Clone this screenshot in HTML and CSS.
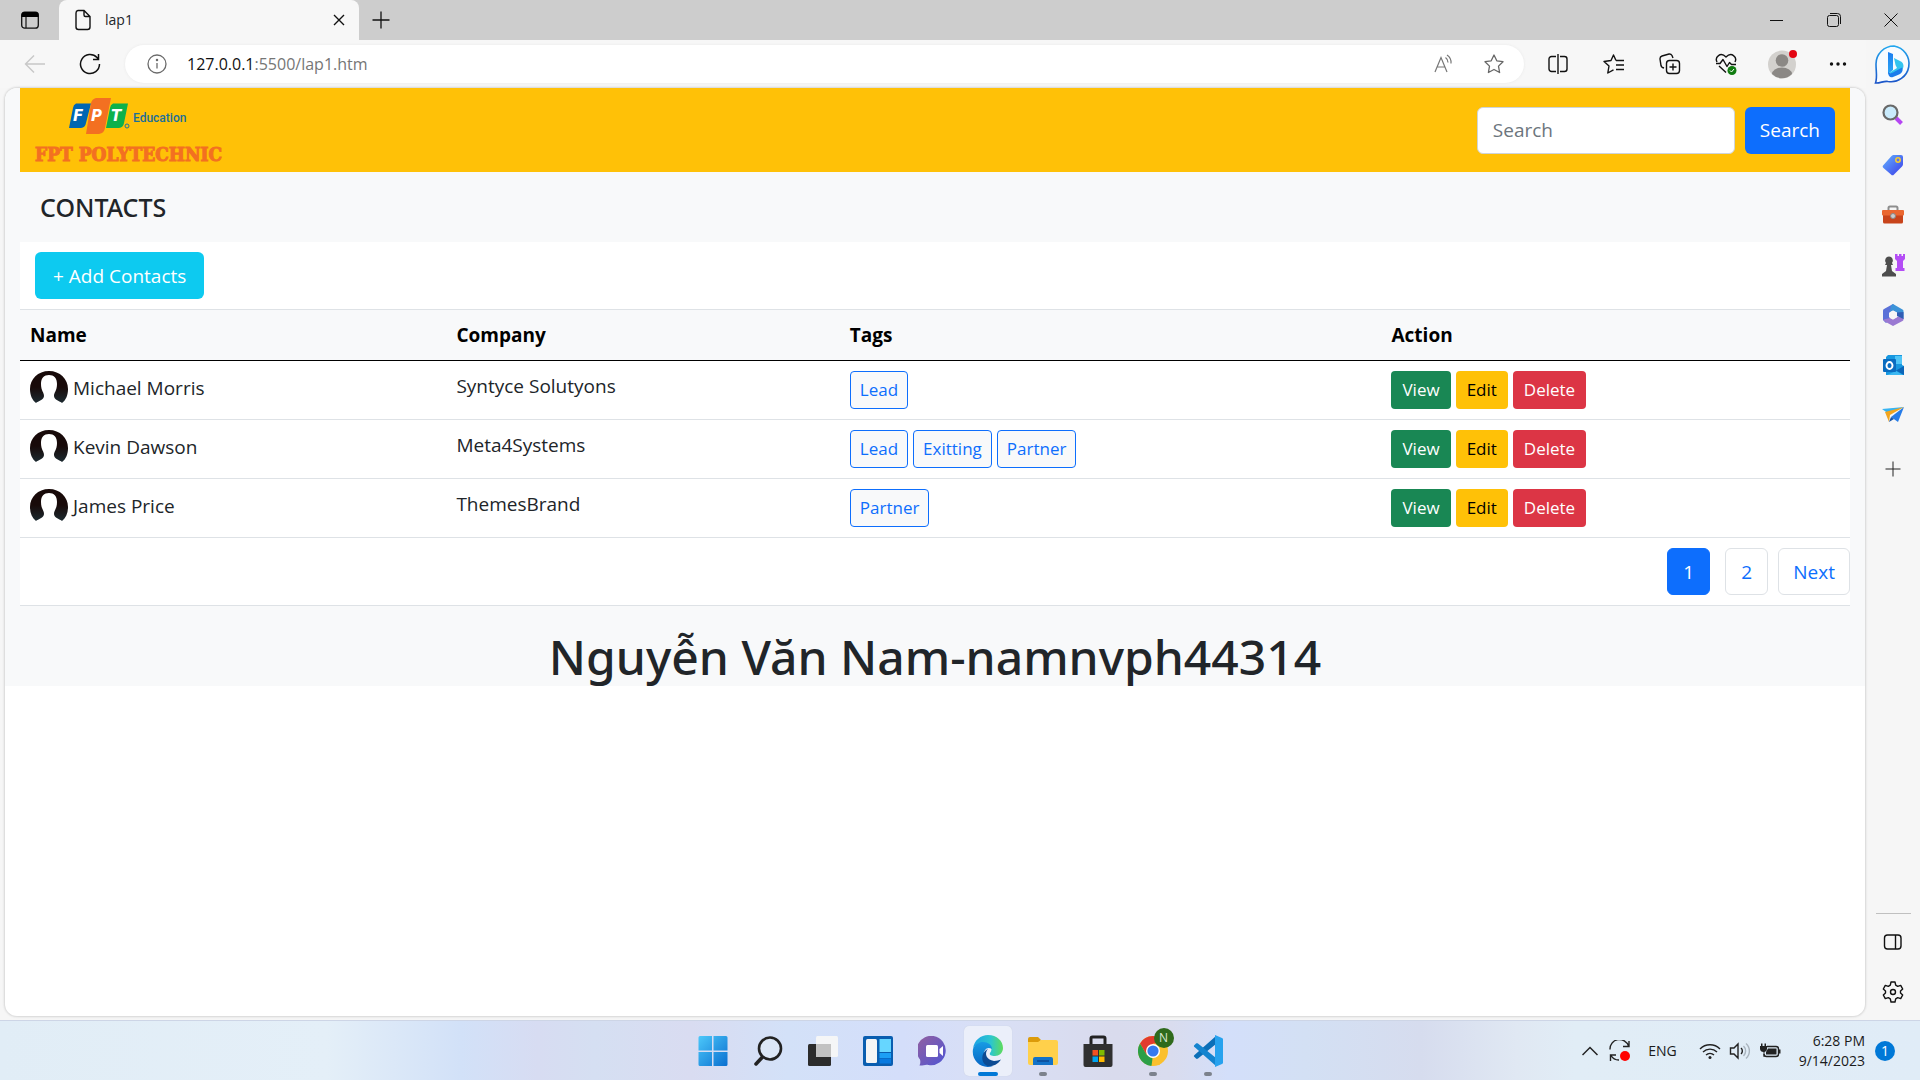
FILE: index.html
```html
<!DOCTYPE html>
<html lang="vi">
<head>
<meta charset="utf-8">
<title>lap1</title>
<link rel="stylesheet" href="styles.css">
</head>
<body>
<header class="tabstrip">
  <button class="tab-actions" aria-label="Tab actions"><svg width="20" height="20" viewBox="0 0 20 20"><rect x="1.700" y="2.200" width="16.600" height="16" rx="3" fill="none" stroke="#111" stroke-width="1.300"/><path d="M1.500 7V5a3 3 0 0 1 3-3h11a3 3 0 0 1 3 3v2z" fill="#000"/><path d="M6 7v11" stroke="#111" stroke-width="1.200"/></svg></button>
  <div class="tab">
    <svg width="18" height="22" viewBox="0 0 18 22" fill="none" stroke="#111" stroke-width="1.400"><path d="M4 1.500h6l6 6V18a2.500 2.500 0 0 1-2.500 2.500h-9A2.500 2.500 0 0 1 2 18V4a2.500 2.500 0 0 1 2-2.500zM10 1.500V6a1.500 1.500 0 0 0 1.500 1.500H16"/></svg>
    <span class="tab-title">lap1</span>
    <button class="tab-close" aria-label="Close tab"><svg width="12" height="12" viewBox="0 0 12 12" stroke="#111" stroke-width="1.400"><path d="M1 1l10 10M11 1L1 11"/></svg></button>
  </div>
  <button class="new-tab" aria-label="New tab"><svg width="18" height="18" viewBox="0 0 18 18" stroke="#111" stroke-width="1.300"><path d="M9 .500v17M.500 9h17"/></svg></button>
  <div class="window-controls">
    <button aria-label="Minimize"><svg width="14" height="14" viewBox="0 0 14 14" stroke="#111"><path d="M0 7.500h13"/></svg></button>
    <button aria-label="Restore"><svg width="14" height="14" viewBox="0 0 14 14" fill="none" stroke="#111"><rect x=".500" y="2.500" width="11" height="11" rx="2"/><path d="M3 .500h7.500a3 3 0 0 1 3 3V11"/></svg></button>
    <button aria-label="Close"><svg width="14" height="14" viewBox="0 0 14 14" stroke="#111"><path d="M.500.500l13 13M13.500.500l-13 13"/></svg></button>
  </div>
</header>

<div class="browser">
  <div class="main-column">
    <nav class="toolbar">
      <div class="nav-buttons">
        <button aria-label="Back"><svg width="22" height="20" viewBox="0 0 22 20" fill="none" stroke="#c8c8c8" stroke-width="1.400"><path d="M21 10H1.500M10 1.500L1.500 10l8.500 8.500"/></svg></button>
        <button aria-label="Refresh"><svg width="22" height="22" viewBox="0 0 22 22" fill="none" stroke="#111" stroke-width="1.500"><path d="M20.500 11A9.500 9.500 0 1 1 18 4.600l1.500 1.800M19.500 1v5.500H14"/></svg></button>
      </div>
      <div class="address">
        <svg width="20" height="20" viewBox="0 0 20 20" fill="none" stroke="#6b6b6b" stroke-width="1.300"><circle cx="10" cy="10" r="9"/><path d="M10 9v5.500"/><circle cx="10" cy="6" r=".600" fill="#6b6b6b"/></svg>
        <span class="url"><b>127.0.0.1</b>:5500/lap1.htm</span>
        <button aria-label="Read aloud"><svg width="20" height="20" viewBox="0 0 20 20" fill="none" stroke="#777" stroke-width="1.200"><path d="M1 18L7 3.500 13 18M3 13h8M11.500 3.500a6 6 0 0 1 2.500 5M13 1a9 9 0 0 1 4 8.500"/></svg></button>
        <button aria-label="Add to favorites"><svg width="20" height="20" viewBox="0 0 20 20" fill="none" stroke="#666" stroke-width="1.300" stroke-linejoin="round"><path d="M10 1l2.800 5.800 6.200.900-4.500 4.400 1.100 6.400L10 15.500l-5.600 3 1.100-6.400L1 7.700l6.200-.900z"/></svg></button>
      </div>
      <div class="tools">
        <button aria-label="Split screen"><svg width="20" height="22" viewBox="0 0 20 22" fill="none" stroke="#111" stroke-width="1.400"><path d="M8 3.500H3.500a2.500 2.500 0 0 0-2.500 2.500v10a2.500 2.500 0 0 0 2.500 2.500H8M12 3.500h4.500A2.500 2.500 0 0 1 19 6v10a2.500 2.500 0 0 1-2.500 2.500H12M10 1v20"/></svg></button>
        <button aria-label="Favorites"><svg width="22" height="20" viewBox="0 0 22 20" fill="none" stroke="#111" stroke-width="1.400" stroke-linejoin="round"><path d="M13 6.500L10.500 1 8 6.500l-7 1 5 4.500-1.200 7 5.700-3.200M13 6.500h8M13 11h8M13 15.500h8"/></svg></button>
        <button aria-label="Collections"><svg width="22" height="22" viewBox="0 0 22 22" fill="none" stroke="#111" stroke-width="1.400"><rect x="7.500" y="7.500" width="13" height="13" rx="3"/><path d="M14 10.500v7M10.500 14h7M5 15l-1.500-.500a3 3 0 0 1-1.500-2L1 6a3 3 0 0 1 2-3l7-2a3 3 0 0 1 3 1.500L14 5"/></svg></button>
        <button aria-label="Browser essentials"><svg width="22" height="22" viewBox="0 0 22 22" fill="none" stroke="#111" stroke-width="1.400" stroke-linejoin="round"><path d="M2 9C-.500 4 5.500-1.500 11 4c5.500-5.500 11.500 0 9 5M1 10.500h4l3-4 4 7 2.500-4 2 2H21M4 13l7 6.500"/><circle cx="17" cy="17.500" r="4.500" fill="#107c10" stroke="none"/><path d="M15 17.500l1.500 1.500 2.500-3" stroke="#fff" stroke-width="1"/></svg></button>
        <button aria-label="Profile"><svg width="30" height="30" viewBox="0 0 30 30"><circle cx="15" cy="15.500" r="14" fill="#d3d1ce"/><circle cx="15" cy="11.500" r="6.300" fill="#8b8885"/><path d="M5 25a10 6.500 0 0 1 20 0 14 14 0 0 1-20 0z" fill="#8b8885"/><circle cx="26" cy="5" r="4" fill="#e30613"/></svg></button>
        <button aria-label="Settings and more"><svg width="18" height="6" viewBox="0 0 18 6" fill="#111"><circle cx="2.500" cy="3" r="1.700"/><circle cx="9" cy="3" r="1.700"/><circle cx="15.500" cy="3" r="1.700"/></svg></button>
      </div>
    </nav>

    <div class="viewport">
      <main class="page">
        <div class="brandbar">
          <a class="brand" href="#">
            <svg width="120" height="40" viewBox="0 0 120 40" role="img" aria-label="FPT Education">
              <path d="M7 6.500h15l-5 19.500a6 6 0 0 1-5 5H0L4 11a6 6 0 0 1 3-4.500z" fill="#0066b3"/>
              <path d="M44 6.500h15L55 26a6 6 0 0 1-5 5H37l4-20a6 6 0 0 1 3-4.500z" fill="#0db14b"/>
              <path d="M27 1h15l-6 30a7 7 0 0 1-6 6H17l5-31a7 7 0 0 1 5-5z" fill="#f37021"/>
              <g class="logo-letters"><text x="4" y="24">F</text><text x="22" y="24">P</text><text x="42" y="24">T</text></g>
              <circle cx="58" cy="29" r="2" fill="none" stroke="#1b75a0"/>
              <text class="logo-education" x="64" y="25">Education</text>
            </svg>
            <span class="brand-name">FPT POLYTECHNIC</span>
          </a>
          <form class="search">
            <input type="search" placeholder="Search" aria-label="Search">
            <button class="btn btn-primary" type="button">Search</button>
          </form>
        </div>
        <h5 class="section-title">CONTACTS</h5>
        <div class="add-row"><button class="btn btn-info">+ Add Contacts</button></div>
        <table class="contacts">
          <colgroup><col class="col-name"><col class="col-company"><col class="col-tags"><col></colgroup>
          <thead><tr><th>Name</th><th>Company</th><th>Tags</th><th>Action</th></tr></thead>
          <tbody>
            <tr>
              <td><div class="person"><svg width="38" height="34"><use href="#avatar"/></svg>Michael Morris</div></td>
              <td>Syntyce Solutyons</td>
              <td><div class="buttons"><button class="btn-sm tag">Lead</button></div></td>
              <td><div class="buttons"><button class="btn-sm view">View</button><button class="btn-sm edit">Edit</button><button class="btn-sm delete">Delete</button></div></td>
            </tr>
            <tr>
              <td><div class="person"><svg width="38" height="34"><use href="#avatar"/></svg>Kevin Dawson</div></td>
              <td>Meta4Systems</td>
              <td><div class="buttons"><button class="btn-sm tag">Lead</button><button class="btn-sm tag">Exitting</button><button class="btn-sm tag">Partner</button></div></td>
              <td><div class="buttons"><button class="btn-sm view">View</button><button class="btn-sm edit">Edit</button><button class="btn-sm delete">Delete</button></div></td>
            </tr>
            <tr>
              <td><div class="person"><svg width="38" height="34"><use href="#avatar"/></svg>James Price</div></td>
              <td>ThemesBrand</td>
              <td><div class="buttons"><button class="btn-sm tag">Partner</button></div></td>
              <td><div class="buttons"><button class="btn-sm view">View</button><button class="btn-sm edit">Edit</button><button class="btn-sm delete">Delete</button></div></td>
            </tr>
          </tbody>
        </table>
        <nav class="pagination" aria-label="Pages">
          <a class="page-link active" href="#">1</a>
          <a class="page-link" href="#">2</a>
          <a class="page-link" href="#">Next</a>
        </nav>
        <h1 class="author">Nguyễn Văn Nam-namnvph44314</h1>
      </main>
    </div>
  </div>

  <aside class="sidebar">
    <button class="bing" aria-label="Bing Chat"><svg width="40" height="42" viewBox="0 0 40 42"><defs><linearGradient id="bingRing" x1="0" y1="0" x2="0" y2="1"><stop offset="0" stop-color="#23a7ee"/><stop offset="1" stop-color="#1b54c8"/></linearGradient><linearGradient id="bingB" x1="0" y1="0" x2="0" y2="1"><stop offset="0" stop-color="#1b7df0"/><stop offset="1" stop-color="#2ca8f5"/></linearGradient></defs><path d="M21 2a18 18 0 1 1-6 35.500c-4-1-8 2-12.500 1.500C4.500 34 3 28 3 20A18 18 0 0 1 21 2z" fill="#f7fbff" stroke="url(#bingRing)" stroke-width="1.600"/><path d="M15 8l5 2v16l-5 4z" fill="url(#bingB)"/><path d="M21 14l7 3.500c3 2 3.500 6 .500 9L20 30l-4-1 8-5-1.500-3z" fill="#33c4ee"/><path d="M15 27.500c1 2 3 2 5 1l9-5c1.500 3 0 5.500-3 7L20 33c-3 1-5-1-5-5.500z" fill="#1c7ceb"/></svg></button>
    <button aria-label="Search"><svg width="22" height="22" viewBox="0 0 22 22"><path d="M14 14l5.500 5.500" stroke="#b546f2" stroke-width="4"/><circle cx="8.500" cy="8.500" r="7" fill="#c9eafb" stroke="#686868" stroke-width="2.200"/></svg></button>
    <button aria-label="Shopping"><svg width="22" height="22" viewBox="0 0 22 22"><defs><linearGradient id="tagFill" x1="0" y1="0" x2="1" y2="1"><stop offset="0" stop-color="#63b3ff"/><stop offset="1" stop-color="#3b3be8"/></linearGradient></defs><path d="M12 1h7a2 2 0 0 1 2 2v7c0 1-.500 2-1 2.500l-8 8a2 2 0 0 1-3 0L1.500 14a2 2 0 0 1 0-3L9.500 2C10 1.500 11 1 12 1z" fill="url(#tagFill)"/><circle cx="16" cy="6" r="2.200" fill="#5b74f0" stroke="#f8cc2c" stroke-width="1.500"/></svg></button>
    <button aria-label="Tools"><svg width="24" height="20" viewBox="0 0 24 20"><path d="M7.500 6V3a1.500 1.500 0 0 1 1.500-1.500h6A1.500 1.500 0 0 1 16.500 3v3" fill="none" stroke="#8d8d8d" stroke-width="2"/><path d="M2 9h20v8a1.500 1.500 0 0 1-1.500 1.500h-17A1.500 1.500 0 0 1 2 17z" fill="#c8441b"/><rect x="1" y="5" width="22" height="5.500" rx="1" fill="#ea6730"/><circle cx="12" cy="11" r="2.500" fill="#ccc" stroke="#888"/></svg></button>
    <button aria-label="Games"><svg width="24" height="24" viewBox="0 0 24 24"><path d="M14 1h2.500v2H18V1h2.500v2H22V1h2v5l-2 2v7h1.500v3h-9v-3H16V8l-2-2z" fill="#b44df5"/><path d="M8 3.500a4 4 0 0 1 3 6.500l1 2h-2l1 6 4 3v2.500H1V21l4-3 1-6H4l1-2a4 4 0 0 1 3-6.500z" fill="#4d4d4d"/></svg></button>
    <button aria-label="Microsoft 365"><svg width="22" height="24" viewBox="0 0 22 24"><path d="M11 1L2 6a2 2 0 0 0-1 2v9l3 3 4-3.500V9l6-4z" fill="#5a71d8"/><path d="M9 2.500L11 1l9.500 5.500a2 2 0 0 1 1 1.500v8L15 12V9.500L11 7.500 8 9z" fill="#3c93d8"/><path d="M21.500 15v1.500a2 2 0 0 1-1 1.500L11 23l-9-5-.500-1.500L8 15l3 1.500 5-3z" fill="#9a79d2"/><path d="M21.500 9v7L15 13V9.500z" fill="#315db4"/><path d="M11 7.500l4 2.300v4.400l-4 2.300-4-2.300V9.800z" fill="#f6f6f6"/></svg></button>
    <button aria-label="Outlook"><svg width="22" height="22" viewBox="0 0 22 22"><path d="M6 1h14v10l2 1v9H4V3z" fill="#1797df"/><path d="M13 2h7v8h-7z" fill="#4fc5f7"/><path d="M22 12v9l-8-4.500z" fill="#0b65b8"/><path d="M5 21l9-4 7 4z" fill="#3cb8f2"/><rect x="1" y="5" width="13" height="13" rx="1" fill="#0a6cc0"/><ellipse cx="7.500" cy="11.500" rx="3" ry="3.500" fill="none" stroke="#fff" stroke-width="1.900"/></svg></button>
    <button aria-label="Drop"><svg width="24" height="18" viewBox="0 0 24 18"><path d="M1 3L23 1 8 8z" fill="#36b4f2"/><path d="M23 1L17 16l-7-5z" fill="#267ce8"/><path d="M4 6L23 1 9 9l-1 7z" fill="#f2a51e"/><path d="M8 16l2-5 3 2z" fill="#1754a8"/></svg></button>
    <button class="add-tool" aria-label="Customize"><svg width="16" height="16" viewBox="0 0 16 16" stroke="#222"><path d="M8 .500v15M.500 8h15"/></svg></button>
    <div class="sidebar-end">
      <button aria-label="Hide sidebar"><svg width="20" height="18" viewBox="0 0 20 18" fill="none" stroke="#111" stroke-width="1.400"><rect x="1.500" y="2" width="16.500" height="14" rx="3"/><path d="M12.500 2v14"/></svg></button>
      <button aria-label="Sidebar settings"><svg width="22" height="22" viewBox="0 0 22 22" fill="none" stroke="#111" stroke-width="1.400" stroke-linejoin="round"><path d="M9 1h4l.700 3.200 2 1.200 3-1 2 3.600L18.500 10v2l2.200 2-2 3.600-3-1-2 1.200L13 21H9l-.700-3.200-2-1.200-3 1-2-3.600L3.500 12v-2L1.300 8l2-3.600 3 1 2-1.200z"/><circle cx="11" cy="11" r="2.500"/></svg></button>
    </div>
  </aside>
</div>

<footer class="taskbar">
  <div class="apps">
    <button aria-label="Start"><svg width="30" height="32" viewBox="0 0 30 32"><defs><linearGradient id="winFill" x1="0" y1="0" x2="1" y2="1"><stop offset="0" stop-color="#4cc8fa"/><stop offset="1" stop-color="#0a6fd0"/></linearGradient></defs><path d="M2 1h12v14.500H.500V2.500A1.500 1.500 0 0 1 2 1zM15.500 1H28a1.500 1.500 0 0 1 1.500 1.500v13h-14zM.500 17H14v14H2a1.500 1.500 0 0 1-1.500-1.500zM15.500 17h14v12.500A1.500 1.500 0 0 1 28 31H15.500z" fill="url(#winFill)"/></svg></button>
    <button aria-label="Search"><svg width="30" height="32" viewBox="0 0 30 32" fill="none" stroke="#222" stroke-linecap="round"><path d="M9.500 22L3 29" stroke-width="3.500"/><circle cx="17" cy="13.500" r="11" stroke-width="2.600" fill="#dce7f6"/></svg></button>
    <button aria-label="Task view"><svg width="32" height="32" viewBox="0 0 32 32"><rect x="1" y="9" width="23" height="22" rx="1.500" fill="#2c2c2c"/><rect x="9" y="1" width="22" height="21" rx="1.500" fill="#f7f7f7" opacity=".950"/><path d="M9 9h15v13H9z" fill="#c2c2c2"/></svg></button>
    <button aria-label="Widgets"><svg width="30" height="30" viewBox="0 0 30 30"><rect width="30" height="30" rx="2" fill="#0a5eb0"/><rect x="3" y="3" width="11" height="24" rx="1.500" fill="#f5f5f5"/><path d="M16.500 3H28v13H16.500z" fill="#66d6ff"/><path d="M16.500 17H28v5H16.500z" fill="#1c9ff5"/><path d="M16.500 22.500H28v5H16.500z" fill="#087ae0"/></svg></button>
    <button aria-label="Chat"><svg width="30" height="30" viewBox="0 0 30 30"><defs><linearGradient id="chatFill" x1="0" y1="0" x2="1" y2="1"><stop offset="0" stop-color="#94609f"/><stop offset="1" stop-color="#4f55d4"/></linearGradient></defs><path d="M15.500 0a14.500 14.500 0 1 1-5 29c-3-1-6 1-9 .500 1-2 1-4 .500-6A14.500 14.500 0 0 1 15.500 0z" fill="url(#chatFill)"/><rect x="8" y="9" width="12" height="12" rx="1.500" fill="#fff"/><path d="M21.500 13L25 10v10l-3.500-3z" fill="#fff"/></svg></button>
    <button class="current" aria-label="Microsoft Edge"><svg width="32" height="32" viewBox="0 0 32 32"><defs><linearGradient id="edgeTop" x1="0" y1="0" x2="1" y2="0"><stop offset="0" stop-color="#1ca3e6"/><stop offset=".600" stop-color="#2cc6ce"/><stop offset="1" stop-color="#5fdc5a"/></linearGradient><linearGradient id="edgeLow" x1="0" y1="0" x2="0" y2="1"><stop offset="0" stop-color="#189be4"/><stop offset="1" stop-color="#0766c4"/></linearGradient></defs><path d="M1 14C2 5 9 0 16 0c9 0 15 6 15 13 0 5-4 8-8 8-4 0-6-1-5-3 4-5-1-10-7-10-5 0-9 3-10 6z" fill="url(#edgeTop)"/><path d="M1 14c2-5 6-7 10-7 5 0 9 3 9 7-5-3-8 1-8 5 0 6 4 11 9 12-11 4-22-5-20-17z" fill="url(#edgeLow)"/><path d="M16 14c-4 4-2 11 6 12 3 0 5-1 7-1.500-4 6-9 7-13 6.500-7-2-8-13 0-17z" fill="#0c4b93"/></svg></button>
    <button class="running" aria-label="File Explorer"><svg width="30" height="30" viewBox="0 0 30 30"><path d="M0 3a2 2 0 0 1 2-2h8l3 3-3 4H0z" fill="#dc9b0a"/><path d="M0 6h10l3-2h15a2 2 0 0 1 2 2v21a2 2 0 0 1-2 2H2a2 2 0 0 1-2-2z" fill="#ffd04b"/><path d="M5 29v-6a2 2 0 0 1 2-2h16a2 2 0 0 1 2 2v6z" fill="#1272c8"/><path d="M9 25h12" stroke="#0b4a94" stroke-width="1.500"/></svg></button>
    <button aria-label="Microsoft Store"><svg width="30" height="32" viewBox="0 0 30 32"><path d="M8 10V3.500A1.500 1.500 0 0 1 9.500 2h11A1.500 1.500 0 0 1 22 3.500V10" fill="none" stroke="#222" stroke-width="3"/><path d="M.500 9h29v21a2 2 0 0 1-2 2h-25a2 2 0 0 1-2-2z" fill="#303030"/><path d="M9.500 15H15v5.500H9.500z" fill="#f25022"/><path d="M16 15h5.500v5.500H16z" fill="#7fba00"/><path d="M9.500 21.500H15V27H9.500z" fill="#00a4ef"/><path d="M16 21.500h5.500V27H16z" fill="#ffb900"/></svg></button>
    <button class="running" aria-label="Google Chrome"><svg width="30" height="32" viewBox="0 0 30 32"><circle cx="15" cy="16" r="15" fill="#fbc02d"/><path d="M2 8.500A15 15 0 0 1 28 8.500H15l-6.500 11z" fill="#e33b2e"/><path d="M2 8.500l6.500 11 6 4L13.500 31A15 15 0 0 1 2 8.500z" fill="#2c9f47"/><path d="M13.500 31l8-12 3 5-3 6z" fill="#fbc02d"/><circle cx="15" cy="16" r="7" fill="#fff"/><circle cx="15" cy="16" r="5.600" fill="#3579ee"/></svg><span class="profile-badge">N</span></button>
    <button class="running" aria-label="Visual Studio Code"><svg width="30" height="32" viewBox="0 0 30 32"><path d="M1 21.500l2 2c.600.500 1.200.500 2 0L23 9V1L1.500 20c-.700.500-.700 1-.500 1.500z" fill="#0b6fb8"/><path d="M1 10.500l2-2c.600-.500 1.200-.500 2 0L23 23v8L1.500 12c-.700-.500-.700-1-.500-1.500z" fill="#1484cf"/><path d="M22 0l7 3a1.500 1.500 0 0 1 1 1.500v23a1.500 1.500 0 0 1-1 1.500l-7 3z" fill="#27a2ee"/></svg></button>
  </div>
  <div class="tray">
    <button aria-label="Show hidden icons"><svg width="16" height="10" viewBox="0 0 16 10" fill="none" stroke="#222" stroke-width="1.500"><path d="M.500 9L8 1.500 15.500 9"/></svg></button>
    <button aria-label="Update"><svg width="22" height="22" viewBox="0 0 22 22" fill="none" stroke="#222" stroke-width="1.400"><path d="M1 9.500A9.500 9.500 0 0 1 19.500 6M20 1v5.500h-6M10 20a9 9 0 0 1-8-4.500M1.500 21v-6H7"/><circle cx="16" cy="16" r="5" fill="red" stroke="none"/></svg></button>
    <span class="language">ENG</span>
    <button class="status" aria-label="Network, volume and battery">
      <svg width="22" height="18" viewBox="0 0 22 18" fill="none" stroke="#222" stroke-width="1.400"><path d="M1 7a14 14 0 0 1 20 0M4 10a10 10 0 0 1 14 0M7 13a6 6 0 0 1 8 0"/><circle cx="11" cy="15.500" r="1.500" fill="#222" stroke="none"/></svg>
      <svg width="22" height="18" viewBox="0 0 22 18" fill="none" stroke="#222" stroke-width="1.400"><path d="M1.500 6H5l4-4v14l-4-4H1.500zM12 6a4 4 0 0 1 0 6"/><path d="M14.500 4a7 7 0 0 1 0 10M17 1.500a10 10 0 0 1 0 15" stroke="#a9b4be"/></svg>
      <svg width="22" height="18" viewBox="0 0 22 18"><path d="M8 4.500h9a2.500 2.500 0 0 1 2.500 2.500v5a2.500 2.500 0 0 1-2.500 2.500H7.500A2.500 2.500 0 0 1 5 12" fill="none" stroke="#222" stroke-width="1.400"/><path d="M9 6.500h8.500v6H7V10zM20 7.500h1.500v4H20zM1 4h7v3a3.500 3.500 0 0 1-2.500 3v5h-1v-5A3.500 3.500 0 0 1 1 7zM2 1.500h1.500V4H2zM5.500 1.500H7V4H5.500z" fill="#222"/></svg>
    </button>
    <button class="clock"><span>6:28 PM</span><span>9/14/2023</span></button>
    <span class="notice">1</span>
  </div>
</footer>

<svg class="symbols" width="0" height="0" aria-hidden="true">
  <defs>
    <linearGradient id="hair" x1="0" y1="0" x2="0" y2="1"><stop offset=".500" stop-color="#180a09"/><stop offset="1" stop-color="#1c2a30"/></linearGradient>
    <symbol id="avatar" viewBox="0 0 38 34"><path d="M6 32C2 29 0 24 0 18 0 8 8 0 19 0s19 8 19 18c0 6-2 11-6 14-2-2-8-3-8-7 0-4 3-5 3-12 0-6-3-9-8-9s-8 3-8 9c0 7 3 8 3 12 0 4-6 5-8 7z" fill="url(#hair)"/></symbol>
  </defs>
</svg>
</body>
</html>
```
FILE: styles.css
```css
* { box-sizing: border-box; }

body {
  margin: 0;
  min-height: 100vh;
  display: flex;
  flex-direction: column;
  background: #f6f6f6;
  color: #212529;
  font-family: "Open Sans", "Noto Sans", sans-serif;
  font-size: 19px;
  line-height: 30px;
}

button, input { font: inherit; color: inherit; }
button { padding: 0; border: 0; background: none; }
a { color: inherit; text-decoration: none; }
svg { display: block; flex: none; }
.symbols { position: absolute; }

/* Tab strip */
.tabstrip {
  height: 40px;
  display: flex;
  background: #cdcdcd;
}
.tabstrip button { display: grid; place-items: center; }
.tab-actions { width: 59px; }
.tab {
  width: 300px;
  padding: 0 14px 0 15px;
  display: flex;
  align-items: center;
  border-radius: 8px 8px 0 0;
  background: #f7f7f7;
  font-size: 14px;
}
.tab-title { flex: 1; margin-left: 13px; }
.new-tab { width: 44px; }
.window-controls { margin-left: auto; padding-right: 1px; display: flex; }
.window-controls button { width: 57px; }

/* Browser frame */
.browser {
  flex: 1;
  display: grid;
  grid-template-columns: 1fr 54px;
}
.main-column { display: flex; flex-direction: column; }
.toolbar {
  height: 48px;
  padding-left: 7px;
  display: flex;
  align-items: center;
  background: #f7f7f7;
}
.nav-buttons, .tools { display: flex; }
.toolbar button { display: grid; place-items: center; height: 38px; }
.nav-buttons button { width: 55px; }
.address {
  flex: 1;
  height: 38px;
  margin: 0 6px 0 8px;
  padding: 0 20px 0 22px;
  display: flex;
  align-items: center;
  border-radius: 19px;
  background: #fff;
  box-shadow: 0 0 3px #e8e8e8;
}
.url { flex: 1; margin-left: 20px; font-size: 16px; color: #767676; }
.url b { font-weight: 400; color: #111; }
.address button { width: 20px; margin-left: 30px; }
.tools button { width: 56px; }

.viewport {
  flex: 1;
  margin: 0 1px 4px 5px;
  overflow: hidden;
  border-radius: 12px;
  background: #fff;
  box-shadow: 0 0 2px 1px #d6d6d6;
}

/* Page */
.page { padding: 0 15px; background: #f8f9fa; }
.brandbar {
  height: 84px;
  padding: 0 15px;
  display: flex;
  align-items: center;
  justify-content: space-between;
  background: #ffc107;
}
.brand { padding-top: 8px; display: flex; flex-direction: column; align-items: center; }
.logo-letters { fill: #fff; font: italic bold 15px "DejaVu Sans", sans-serif; }
.logo-education { fill: #1b6f98; font: 500 12px "Roboto", sans-serif; }
.brand-name {
  color: #f37021;
  -webkit-text-stroke: 1px #f37021;
  font: bold 19px/34px "DejaVu Serif Condensed", "DejaVu Serif", serif;
}
.search { display: flex; gap: 10px; }
.search input {
  width: 258px;
  height: 47px;
  padding: 0 15px;
  border: 1px solid #ced4da;
  border-radius: 6px;
  background: #fff;
}
.search input::placeholder { color: #6c757d; opacity: 1; }
.btn { height: 47px; padding: 0 15px; border-radius: 6px; color: #fff; }
.btn-primary { background: #0d6efd; }
.btn-info { padding: 0 18px; background: #0dcaf0; }
.section-title {
  margin: 0;
  padding: 20px;
  font-family: "Noto Sans", sans-serif;
  font-size: 25px;
  font-weight: 500;
}
.add-row { padding: 10px 15px; background: #fff; }
.add-row button { display: block; }

.contacts {
  width: 100%;
  table-layout: fixed;
  border-collapse: collapse;
  background: #fff;
}
.col-name { width: 23.3%; }
.col-company { width: 21.5%; }
.col-tags { width: 29.6%; }
.contacts th {
  padding: 10px;
  text-align: left;
  color: #000;
  background: #f8f9fa;
  border-top: 1px solid #dee2e6;
  border-bottom: 1px solid #000;
}
.contacts td {
  height: 59px;
  padding: 10px 10px 0;
  vertical-align: top;
  border-bottom: 1px solid #dee2e6;
}
.person { display: flex; align-items: center; gap: 5px; height: 34px; }
.buttons { display: flex; gap: 5px; }
.btn-sm {
  height: 38px;
  padding: 0 10px;
  border: 1px solid transparent;
  border-radius: 4px;
  font-size: 17px;
}
.tag { padding: 0 9px; border-color: #0d6efd; background: #f8f9fa; color: #0d6efd; }
.view { background: #198754; color: #fff; }
.edit { background: #ffc107; color: #000; }
.delete { background: #dc3545; color: #fff; }

.pagination {
  padding: 10px 0;
  display: flex;
  justify-content: flex-end;
  gap: 10px;
  background: #fff;
  border-bottom: 1px solid #dee2e6;
}
.page-link {
  min-width: 43px;
  height: 47px;
  padding: 8px 14px;
  border: 1px solid #dee2e6;
  border-radius: 6px;
  color: #0d6efd;
  text-align: center;
}
.page-link.active {
  margin-right: 5px;
  border-color: #0d6efd;
  background: #0d6efd;
  color: #fff;
}
.author {
  margin: 0;
  padding-top: 22px;
  text-align: center;
  font-family: "Noto Sans", sans-serif;
  font-size: 48px;
  font-weight: 500;
  line-height: 58px;
}

/* Edge sidebar */
.sidebar {
  padding-bottom: 3px;
  display: flex;
  flex-direction: column;
  align-items: center;
}
.sidebar button { width: 54px; height: 50px; display: grid; place-items: center; }
.sidebar .add-tool { margin-top: 4px; }
.sidebar-end {
  width: 35px;
  margin-top: auto;
  padding-top: 3px;
  display: flex;
  flex-direction: column;
  align-items: center;
  border-top: 1px solid #c0c0c0;
}

/* Taskbar */
.taskbar {
  height: 60px;
  display: grid;
  grid-template-columns: 1fr auto 1fr;
  align-items: center;
  border-top: 1px solid #cdd5e6;
  background: linear-gradient(90deg, #e1edf6 0%, #e4eff8 17%, #d2e1f8 24%, #d7dcf2 28%, #d5dff2 31%, #d9dcf1 36%, #d3e1f8 41%, #d4defa 47%, #d9dff5 52%, #d9dbed 58%, #d9dcee 61%, #d3dffa 64%, #d3e0f4 68%, #d6dcee 74%, #e0e8f3 79%, #e1edf6 82%, #e0ecf7 100%);
}
.apps { grid-column: 2; display: flex; gap: 7px; }
.apps button {
  position: relative;
  width: 48px;
  height: 50px;
  display: grid;
  place-items: center;
  border-radius: 5px;
}
.apps .current { background: #ebeffa; box-shadow: 0 0 1px #c0c8d8; }
.apps .current::after, .running::after {
  content: "";
  position: absolute;
  bottom: 0;
  width: 8px;
  height: 4px;
  border-radius: 2px;
  background: #7c828c;
}
.apps .current::after { width: 20px; background: #0078d7; }
.profile-badge {
  position: absolute;
  top: 2px;
  right: 3px;
  width: 20px;
  height: 20px;
  border-radius: 50%;
  background: #2f6a1c;
  color: #dce8d4;
  font-size: 12px;
  line-height: 20px;
}
.tray {
  padding-right: 25px;
  display: flex;
  align-items: center;
  justify-content: flex-end;
  font-size: 14px;
  line-height: 20px;
  color: #1b1b1b;
}
.tray > button:nth-child(2) { margin: 0 17px 0 11px; }
.status { display: flex; gap: 8px; margin: 0 18px 0 22px; }
.clock { display: flex; flex-direction: column; text-align: right; }
.notice {
  width: 20px;
  height: 20px;
  margin-left: 10px;
  border-radius: 50%;
  background: #0078d7;
  color: #fff;
  text-align: center;
}
```
